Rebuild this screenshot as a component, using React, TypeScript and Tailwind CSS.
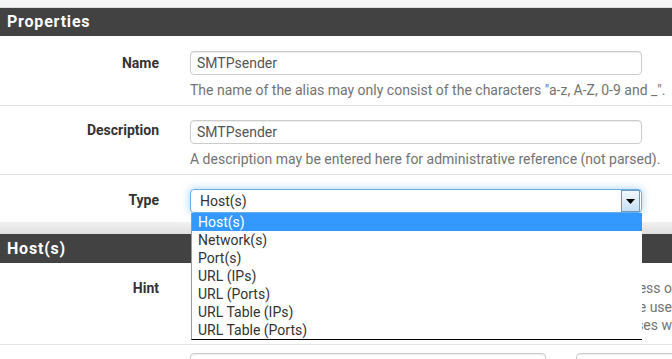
import React from "react";

const font = { fontFamily: "Roboto, 'Liberation Sans', sans-serif" };

function Input({ value, className = "" }: { value: string; className?: string }) {
  return (
    <div
      className={`h-[24px] shrink-0 rounded-[4px] border border-[#cccccc] bg-white pl-[6px] text-[14px] leading-[22px] text-[#555555] shadow-[inset_0_1px_1px_rgba(0,0,0,0.075)] ${className}`}
    >
      {value}
    </div>
  );
}

export default function App() {
  const options = [
    "Host(s)",
    "Network(s)",
    "Port(s)",
    "URL (IPs)",
    "URL (Ports)",
    "URL Table (IPs)",
    "URL Table (Ports)",
  ];
  return (
    <div className="relative w-[672px] h-[359px] overflow-hidden bg-white" style={font}>
      {/* top band */}
      <div className="h-[8px] bg-[#f5f5f5] border-b border-[#dddddd]" />
      {/* Properties header */}
      <div className="h-[28px] bg-[#424242] pl-[7px] text-[16px] font-bold leading-[28px] text-white tracking-[0.8px]">
        Properties
      </div>

      {/* Name row */}
      <div className="grid grid-cols-[190px_452px] pt-[15px] pb-[6px]">
        <div className="pr-[31px] text-right text-[14px] font-bold leading-[24px] text-[#333333]">Name</div>
        <div>
          <Input value="SMTPsender" />
          <div className="mt-[6px] whitespace-nowrap text-[14px] leading-[18px] text-[#737373]">
            The name of the alias may only consist of the characters "a-z, A-Z, 0-9 and _".
          </div>
        </div>
      </div>

      {/* Description row */}
      <div className="grid grid-cols-[190px_452px] border-t border-[#e3e3e3] pt-[14px] pb-[6px]">
        <div className="pr-[31px] text-right text-[14px] font-bold leading-[24px] text-[#333333] mt-[-2px]">Description</div>
        <div>
          <Input value="SMTPsender" />
          <div className="mt-[6px] whitespace-nowrap text-[14px] leading-[18px] text-[#737373]">
            A description may be entered here for administrative reference (not parsed).
          </div>
        </div>
      </div>

      {/* Type row */}
      <div className="grid grid-cols-[190px_452px] border-t border-[#e3e3e3] pt-[14px] pb-[9px]">
        <div className="pr-[31px] text-right text-[14px] font-bold leading-[24px] text-[#333333] mt-[-1px]">Type</div>
        <div className="flex h-[24px] items-center rounded-[4px] border border-[#66afe9] bg-white shadow-[0_0_8px_rgba(102,175,233,0.6)]">
          <div className="flex-1 pl-[9px] text-[14px] leading-[22px] text-[#333333]">Host(s)</div>
          <div className="mr-[1px] flex h-[22px] w-[19px] items-center justify-center border border-[#6f98c0] bg-gradient-to-b from-[#f3f8fc] to-[#c6e0f6]">
            <svg width="9" height="5" viewBox="0 0 9 5">
              <path d="M0 0 H9 L4.5 5 Z" fill="#000" />
            </svg>
          </div>
        </div>
      </div>

      {/* gap band */}
      <div className="h-[12px] bg-gradient-to-b from-[#f2f2f2] to-[#dedede]" />

      {/* Host(s) header */}
      <div className="h-[29px] bg-[#424242] pl-[7px] text-[16px] font-bold leading-[29px] text-white tracking-[0.8px]">
        Host(s)
      </div>

      {/* Hint row */}
      <div className="grid grid-cols-[190px_482px] pt-[15px] pb-[9px]">
        <div className="pr-[31px] text-right text-[14px] font-bold leading-[20px] text-[#333333]">Hint</div>
        <div className="flex flex-col items-end overflow-hidden pt-[1px] text-[14px] leading-[18.5px] text-[#737373]">
          <div className="whitespace-nowrap">by their IP address o</div>
          <div className="whitespace-nowrap">all are use</div>
          <div className="whitespace-nowrap">IP addresses w</div>
        </div>
      </div>

      {/* Address row */}
      <div className="flex border-t border-[#e3e3e3] pt-[8px]">
        <div className="w-[190px] shrink-0" />
        <Input value="10.51.194.200" className="w-[356px]" />
        <div className="w-[30px] shrink-0" />
        <Input value="21 Endpoint" className="w-[120px] pl-[16px]" />
      </div>

      {/* open dropdown list */}
      <div className="absolute left-[191px] top-[213px] w-[451px] border-l border-[#9a9a9a] border-b border-b-black bg-white">
        {options.map((o, i) => (
          <div
            key={o}
            className={`h-[18px] pl-[6px] text-[14px] leading-[18px] ${
              i === 0 ? "bg-[#3399ff] text-white" : "text-[#333333]"
            }`}
          >
            {o}
          </div>
        ))}
      </div>
    </div>
  );
}
